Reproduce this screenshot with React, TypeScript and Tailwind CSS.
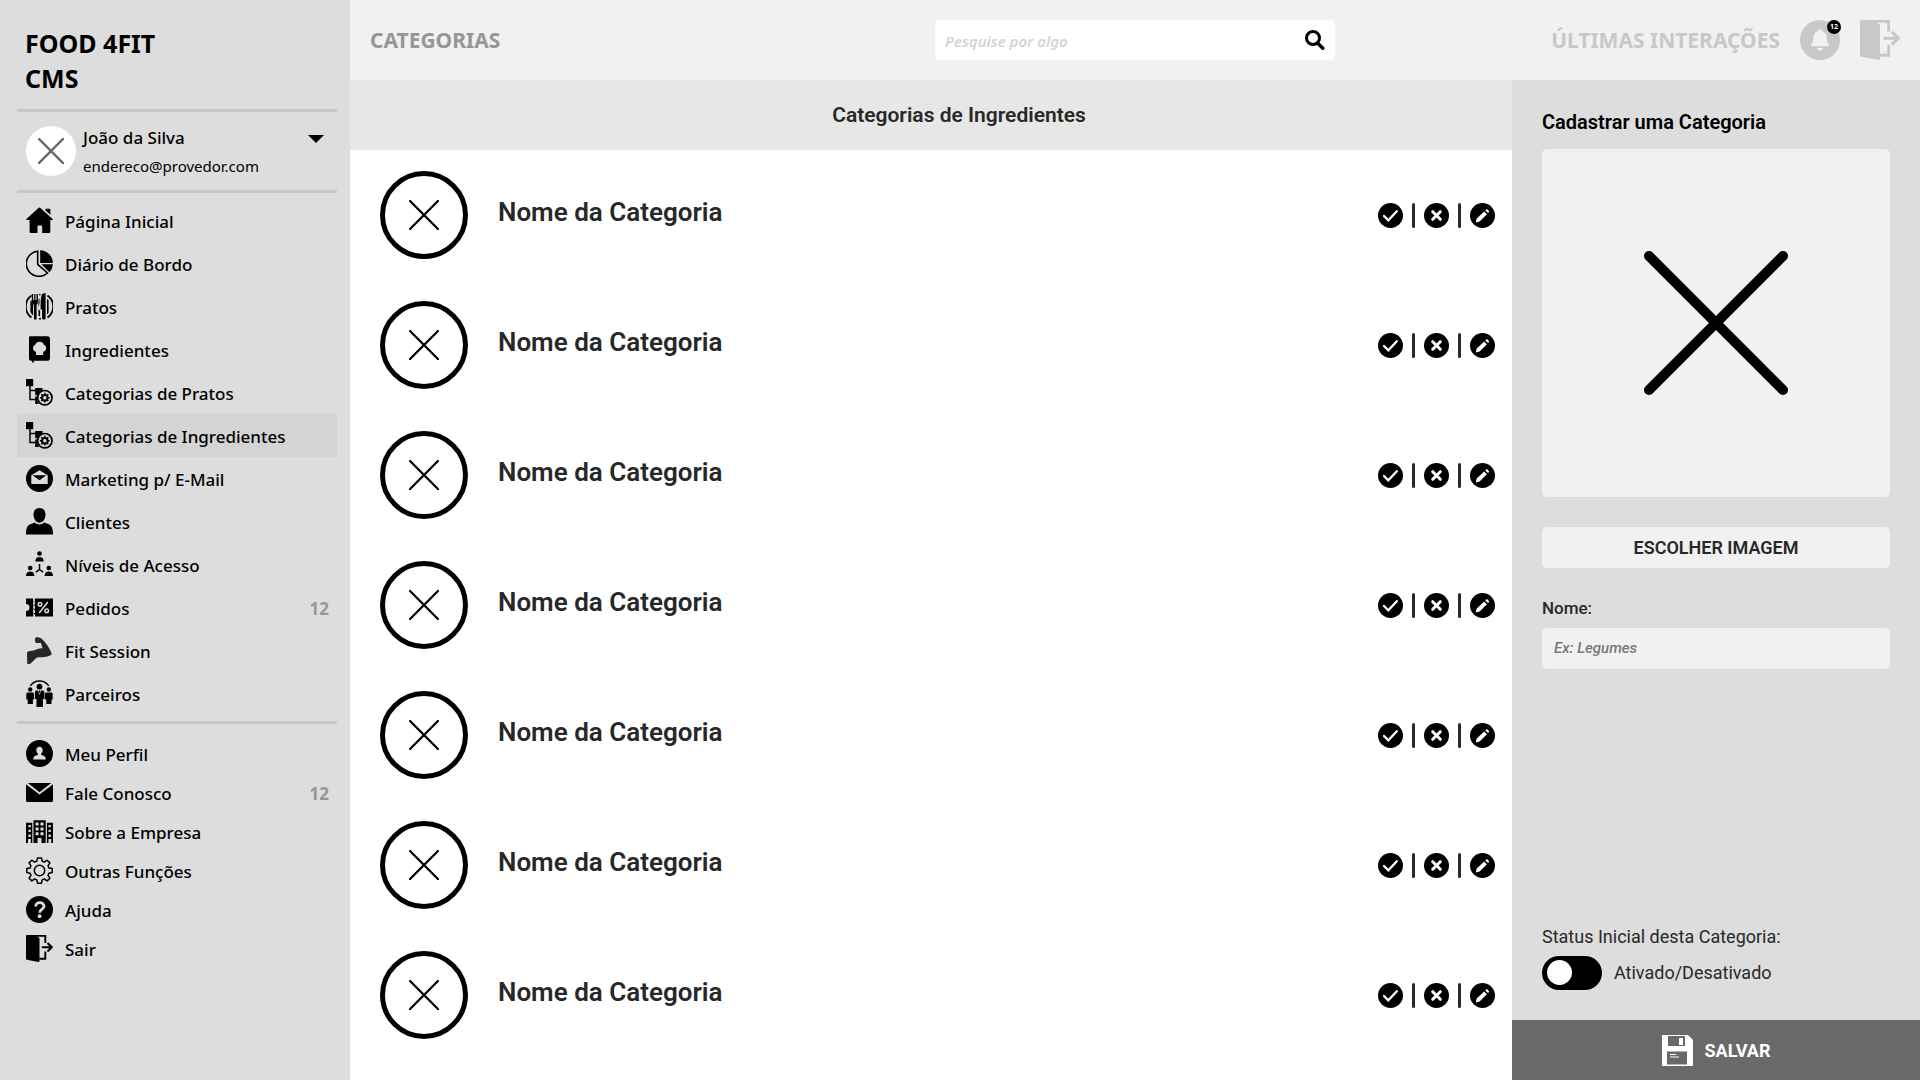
import type { ReactNode } from "react";

type IconProps = { className?: string };

function Svg({ children, className = "size-[27px]", box = "0 0 27 27" }: { children: ReactNode; className?: string; box?: string }) {
  return (
    <svg viewBox={box} className={`shrink-0 ${className}`} fill="currentColor" aria-hidden="true">
      {children}
    </svg>
  );
}

const HomeIcon = () => (
  <Svg>
    <path d="M13.4 0.5a1 1 0 0 1 .7.3L26.6 12c.4.4.3.9-.2 1h-2.1v11.800a1.200 1.200 0 0 1-1.200 1.200H16.200v-6.600a1 1 0 0 0-1-1h-2.700a1 1 0 0 0-1 1V26H4.800a1.200 1.200 0 0 1-1.200-1.200V13H.7c-.6-.1-.7-.6-.3-1L12.700.8a1 1 0 0 1 .7-.3z" />
    <path d="M19.500 2.500a.8.8 0 0 1 .8-.8h3.300a.8.8 0 0 1 .8.8v5.300l-4.900-4.300z" />
  </Svg>
);

const PieIcon = () => (
  <Svg>
    <path d="M11.700 1.200A12.600 12.600 0 1 0 21.500 23l-9.300-8.200a1.500 1.500 0 0 1-.5-1.100z" fill="none" stroke="currentColor" strokeWidth="1.600" />
    <path d="M14.200 0.300A13 13 0 0 1 26.900 12.900H14.200z" />
    <path d="M15.300 14.200h11.600a13 13 0 0 1-3.400 8z" />
  </Svg>
);

const DishIcon = () => (
  <Svg>
    <path d="M5.500 2.500A13.500 13.500 0 0 0 5.500 24.500" fill="none" stroke="currentColor" strokeWidth="1.800" />
    <path d="M21.500 2.500A13.500 13.500 0 0 1 21.500 24.500" fill="none" stroke="currentColor" strokeWidth="1.800" />
    <path d="M4.400 8.200v10.600a9.500 9.500 0 0 0 2.700 3.800V11.500A5 5 0 0 1 5.500 7z" />
    <path d="M22.600 7.500v12a10 10 0 0 1-1.600 2V5.500z" />
    <path d="M5.800 1h1.300v6h1.100V1h1.300v6h1.100V1h1.300v8.200c0 1.200-.6 2-1.300 2.500V25.500a1.200 1.200 0 0 1-2.600 0V11.700C7 11 5.800 10.500 5.800 9z" />
    <path d="M15.500 2.500C16 .5 18 0 19.600.6V25.500c-.5 1.300-3 1.300-3.500 0V16.500h-1.500C14.600 11 14.600 6 15.500 2.500z" />
    <path d="M13 1h1.500v1.200H13zM13 25h2v1.500h-2zM12.500 5.500l1 .5v4.500l-1 4zM12.500 16l1.600 2v5.200l-1.600-.5z" />
  </Svg>
);

const RecipeIcon = () => (
  <Svg>
    <path fillRule="evenodd" d="M4.200.2h17a2.800 2.800 0 0 1 2.800 2.800v18.900a2.800 2.800 0 0 1-2.800 2.800H7.800v1.900H6v-1.900H5a2 2 0 0 1-2-2V1.400A1.200 1.200 0 0 1 4.200.2zM10 19h7.200v-3.300a3.600 3.600 0 0 0 .8-6.900 4.700 4.700 0 0 0-8.800 0 3.600 3.600 0 0 0 .8 6.900z" />
  </Svg>
);

const CategoryIcon = () => (
  <Svg>
    <path d="M0 0h7.200v7.200H0z" />
    <path d="M4 7v13.500h6M4 11.500h6" fill="none" stroke="currentColor" strokeWidth="1.500" />
    <path d="M9.200 9h7.300v2.400a8.600 8.600 0 0 0-4.700 5.100l-1.600-.5-1 .5zM9.200 17.500h2.200a9 9 0 0 0 1.700 7.500H9.200z" />
    <circle cx="18.800" cy="18.700" r="7.200" fill="none" stroke="currentColor" strokeWidth="1.700" />
    <circle cx="18.800" cy="18.700" r="3" fill="none" stroke="currentColor" strokeWidth="1.600" />
    <g stroke="currentColor" strokeWidth="1.500">
      <path d="M18.800 13.800v9.800M13.900 18.700h9.800M15.300 15.200l7 7M22.300 15.200l-7 7" />
    </g>
    <circle cx="18.800" cy="18.700" r="1.700" className="fill-[#dddddd]" />
  </Svg>
);

const MarketingIcon = () => (
  <Svg>
    <circle cx="13.500" cy="13.500" r="13.500" />
    <path className="fill-[#dddddd]" d="M5.300 10.300 13.500 5.200l8.200 5.100v8.600H5.300z" />
    <path d="M6.500 10.300h14l-7 4.900z" />
  </Svg>
);

const PersonIcon = () => (
  <Svg>
    <path d="M13.500 0c3.800 0 6 2.700 6 6.500 0 4.200-2.500 8.300-6 8.300s-6-4.100-6-8.300C7.500 2.700 9.700 0 13.500 0z" />
    <path d="M0 26.500c0-6 1.400-8.900 3.700-9.900l5-2c1.300 1.300 3 2 4.800 2s3.500-.7 4.800-2l5 2c2.300 1 3.700 3.900 3.700 9.900z" />
  </Svg>
);

const LevelsIcon = () => (
  <Svg>
    {[
      [13.500, 1],
      [4.200, 15.500],
      [22.800, 15.500],
    ].map(([x, y]) => (
      <g key={x}>
        <circle cx={x} cy={y + 1.500} r="2.300" />
        <path d={`M${x - 4.200} ${y + 9.400}c0-3 1.700-4.400 4.200-4.400s4.200 1.400 4.200 4.400z`} />
      </g>
    ))}
    <path d="M13.500 13v5.500l-3.700 2.600M13.500 18.500l3.700 2.600" fill="none" stroke="currentColor" strokeWidth="1.500" />
  </Svg>
);

const TicketIcon = () => (
  <Svg>
    <path d="M0 4.500h7.200v18H0v-5.500a3.500 3.500 0 0 0 0-7z" />
    <path d="M9 4.500h18v18H9v-2.200h-1.300v-1.300H9v-3H7.700v-1.300H9v-3H7.700v-1.300H9v-3H7.700V7H9z" />
    <g className="stroke-[#dddddd]" fill="none" strokeWidth="1.500">
      <path d="M21.800 8 13.200 19" />
      <circle cx="14" cy="10.300" r="1.800" />
      <circle cx="20.700" cy="16.700" r="1.800" />
    </g>
  </Svg>
);

const ArmIcon = () => (
  <Svg className="size-[27px] text-[#262626]">
    <path d="M10 .3c2 .1 4 .2 5.300 1.200C18.500 4 22.800 9.500 25.300 15.500c.7 1.700.2 2.500-1.300 3-3 1.100-6 2-9 1.700-2.700-.2-4.200.2-5.500 1.500L4.600 26.500c-.5.5-1 .4-3.300.4L1 17c0-1.700.6-2.500 2.200-2.700 3-.4 6-.9 8.600-2.200 1.600-.8 3.200-.9 4.800-.7-.6-1.700-1.100-3.700-1.700-5.700-1.700.8-3 .2-4.200.3-1 .1-1.600-.8-1.600-2C8.900 2.500 9 .9 10 .3z" />
  </Svg>
);

const PartnersIcon = () => (
  <Svg>
    <path d="M4.200 6C8.500-.7 18.500-.7 22.800 6" fill="none" stroke="currentColor" strokeWidth="1.300" />
    <circle cx="13.500" cy="6.700" r="2.900" />
    <path d="M10.300 10.600h1.500l1.700 4.300 1.700-4.300h1.500c1 0 1.700.7 1.700 1.700v6.600h-1.500V27h-5.200v0h-1.200V18.900H9V12.300c0-1 .5-1.700 1.300-1.700z" />
    <path d="M13 10.600h1l.4 1-.9 2-.9-2z" />
    {[4.200, 22.800].map((x) => (
      <g key={x}>
        <circle cx={x} cy="9.500" r="2.200" />
        <path d={`M${x - 2.200} 12.400h4.400c1 0 1.700.7 1.700 1.600v5.500h-1.200V24h-5.200v-4.500h-1.400V14c0-.9.700-1.600 1.700-1.600z`} />
      </g>
    ))}
  </Svg>
);

const ProfileIcon = () => (
  <Svg>
    <circle cx="13.500" cy="13.500" r="13.500" />
    <path className="fill-[#dddddd]" d="M13.500 6.700c2 0 3.200 1.400 3.200 3.400 0 1.700-.7 2.900-1.600 3.700v1l3 1.200c1.100.5 1.600 1.800 1.600 3.500H7.300c0-1.700.5-3 1.600-3.500l3-1.200v-1c-.9-.8-1.600-2-1.600-3.700 0-2 1.200-3.400 3.200-3.400z" />
  </Svg>
);

const EnvelopeIcon = () => (
  <Svg>
    <path d="M1.800 4h23.400L13.500 13.200z" />
    <path d="M0 5.300 13.500 15.500 27 5.300V21.500A1.500 1.500 0 0 1 25.500 23h-24A1.500 1.500 0 0 1 0 21.500z" />
  </Svg>
);

const BuildingIcon = () => (
  <Svg>
    <path d="M7.500 2.300h12.200V25h-4.200v-5h-4v5H7.500zM0 4.800h6.300V25H4.800v-4H2v4H0zM20.900 4.800H27V25h-1.800v-4h-2.700v4h-1.600z" />
    <g className="fill-[#dddddd]">
      {[4.600, 9.400, 14.200].map((y) => (
        <g key={y}>
          <path d={`M9.600 ${y}h3v3h-3zM14.500 ${y}h3v3h-3z`} />
          <path d={`M2.500 ${y + 2.300}h2.300v2.400H2.500zM22.500 ${y + 2.300}h2.300v2.400h-2.300z`} />
        </g>
      ))}
    </g>
  </Svg>
);

const GearIcon = () => (
  <Svg>
    <g fill="none" stroke="currentColor" strokeWidth="1.500" strokeLinejoin="round">
      <circle cx="13.500" cy="13.500" r="5.200" />
      <path d="M11.500 .9h4l.7 3.300 2.100.9 2.900-1.900 2.700 2.700L22 8.800l.9 2.100 3.300.7v3.900l-3.300.7-.9 2.100 1.900 2.900-2.700 2.700-2.900-1.900-2.100.9-.7 3.300h-4l-.7-3.300-2.100-.9-2.900 1.900-2.700-2.700L5 18.300l-.9-2.100-3.300-.7v-3.900l3.300-.7L5 8.800 3.100 5.900l2.700-2.700 2.900 1.900 2.100-.9z" />
    </g>
  </Svg>
);

const HelpIcon = () => (
  <Svg>
    <circle cx="13.500" cy="13.500" r="13.500" />
    <path className="stroke-[#dddddd]" d="M9.700 10.500c0-5 8.300-5 8.300-.3 0 3-4.300 2.700-4.300 6.500" fill="none" strokeWidth="2.800" />
    <circle className="fill-[#dddddd]" cx="13.600" cy="20.200" r="1.900" />
  </Svg>
);

const ExitIcon = ({ className }: IconProps) => (
  <Svg className={className}>
    <path d="M0 1a1 1 0 0 1 1-1h9.500v1.300L13 2.800c.4.200.5.600.5 1V26c0 .7-.4 1.100-1.100 1L1 24.800a1.200 1.200 0 0 1-1-1.200z" />
    <path d="M9.500 .9h9.800V8M19.300 16.500v7.300h-6" fill="none" stroke="currentColor" strokeWidth="1.900" />
    <path d="M15.800 12.300h9.500M21.500 8l4.300 4.300-4.300 4.300" fill="none" stroke="currentColor" strokeWidth="2.100" strokeLinejoin="round" />
  </Svg>
);

const CrossIcon = ({ className, width }: { className: string; width: number }) => (
  <Svg className={className} box="0 0 144 144">
    <path d="M5 5 139 139M139 5 5 139" fill="none" stroke="currentColor" strokeWidth={width} strokeLinecap="round" />
  </Svg>
);

const SearchIcon = () => (
  <Svg className="size-5" box="0 0 20 20">
    <circle cx="8" cy="8" r="6.500" fill="none" stroke="currentColor" strokeWidth="3" />
    <path d="m13 13.500 4.800 4.800" fill="none" stroke="currentColor" strokeWidth="3.400" strokeLinecap="round" />
  </Svg>
);

const BellIcon = () => (
  <Svg className="size-10" box="0 0 40 40">
    <circle cx="20" cy="20" r="20" />
    <path className="fill-[#f1f1f1]" d="M20 8.800c1 0 1.500.8 1.500 2 3.400.9 5 3.600 5.200 7 .2 3.800.5 5 2 6.800.7.900.3 1.700-.8 1.700H12.100c-1.100 0-1.500-.8-.8-1.700 1.500-1.800 1.800-3 2-6.800.2-3.400 1.800-6.100 5.200-7 0-1.200.5-2 1.500-2zM17 28h6c-.3 1.800-1.500 2.700-3 2.700s-2.700-.9-3-2.700z" />
  </Svg>
);

const CheckCircle = () => (
  <Svg className="size-[25px]" box="0 0 25 25">
    <circle cx="12.500" cy="12.500" r="12.500" />
    <path d="m6 13 4.300 4.300L18.800 8.200" fill="none" stroke="white" strokeWidth="2.300" strokeLinecap="round" />
  </Svg>
);

const TimesCircle = () => (
  <Svg className="size-[25px]" box="0 0 25 25">
    <circle cx="12.500" cy="12.500" r="12.500" />
    <path d="m8.700 8.700 7.600 7.600M16.300 8.700l-7.600 7.600" fill="none" stroke="white" strokeWidth="3" strokeLinecap="round" />
  </Svg>
);

const PencilCircle = () => (
  <Svg className="size-[25px]" box="0 0 25 25">
    <circle cx="12.500" cy="12.500" r="12.500" />
    <path fill="white" d="m14.200 8.500 2.700 2.700-7.300 7.300-3.800.9.900-3.800zM15.300 7.400l.8-.8c.5-.5.9-.5 1.400 0l1.300 1.300c.5.500.5.9 0 1.400l-.8.8z" />
  </Svg>
);

const SaveIcon = () => (
  <Svg className="size-[31px]" box="0 0 31 31">
    <path d="M0 0h26l5 5v26H0z" />
    <path className="fill-[#696969]" fillRule="evenodd" d="M6 1h17v10H6zM17 3v7h4V3z" />
    <path className="fill-[#696969]" d="M5 16.500h20v13H5z" />
    <path d="M8 19.500h6M8 22h9" stroke="white" strokeWidth="1" />
  </Svg>
);

type Item = { label: string; icon: ReactNode; count?: number; active?: boolean };

const mainItems: Item[] = [
  { label: "Página Inicial", icon: <HomeIcon /> },
  { label: "Diário de Bordo", icon: <PieIcon /> },
  { label: "Pratos", icon: <DishIcon /> },
  { label: "Ingredientes", icon: <RecipeIcon /> },
  { label: "Categorias de Pratos", icon: <CategoryIcon /> },
  { label: "Categorias de Ingredientes", icon: <CategoryIcon />, active: true },
  { label: "Marketing p/ E-Mail", icon: <MarketingIcon /> },
  { label: "Clientes", icon: <PersonIcon /> },
  { label: "Níveis de Acesso", icon: <LevelsIcon /> },
  { label: "Pedidos", icon: <TicketIcon />, count: 12 },
  { label: "Fit Session", icon: <ArmIcon /> },
  { label: "Parceiros", icon: <PartnersIcon /> },
];

const accountItems: Item[] = [
  { label: "Meu Perfil", icon: <ProfileIcon /> },
  { label: "Fale Conosco", icon: <EnvelopeIcon />, count: 12 },
  { label: "Sobre a Empresa", icon: <BuildingIcon /> },
  { label: "Outras Funções", icon: <GearIcon /> },
  { label: "Ajuda", icon: <HelpIcon /> },
  { label: "Sair", icon: <ExitIcon /> },
];

function NavList({ items, rowClass }: { items: Item[]; rowClass: string }) {
  return (
    <ul>
      {items.map((item) => (
        <li key={item.label} className={`flex ${rowClass} ${item.active ? "bg-[#d4d4d4]" : ""}`}>
          <a href="#" className="flex flex-1 items-center gap-3 pl-[9px] pr-2 text-[17px] font-medium text-black" aria-current={item.active ? "page" : undefined}>
            {item.icon}
            <span className="pt-[2px] whitespace-nowrap">{item.label}</span>
            {item.count !== undefined && <span className="ml-auto pt-[2px] font-bold text-[#969696]">{item.count}</span>}
          </a>
        </li>
      ))}
    </ul>
  );
}

function Sidebar() {
  return (
    <aside className="w-[350px] shrink-0 bg-[#dddddd] pr-[13px] pl-[17px] font-['Noto_Sans',sans-serif]">
      <h1 className="pt-[26px] pb-[13px] pl-2 text-[25px] leading-[35px] font-bold">
        FOOD 4FIT
        <br />
        CMS
      </h1>
      <hr className="border-t-[3px] border-[#c8c8c8]" />
      <button type="button" className="flex h-[78px] w-full items-center pl-[9px] pr-[13px] text-left">
        <span className="grid size-[50px] shrink-0 place-items-center rounded-full bg-white text-[#696969]">
          <CrossIcon className="size-[26px]" width={13} />
        </span>
        <span className="ml-[7px] flex-1 pt-[2px]">
          <span className="block text-[17px] leading-7 font-medium">João da Silva</span>
          <span className="block text-[15px] leading-7">endereco@provedor.com</span>
        </span>
        <Svg className="mb-6 h-2 w-4" box="0 0 16 8">
          <path d="M0 0h16L8 8z" />
        </Svg>
      </button>
      <hr className="border-t-[3px] border-[#c8c8c8]" />
      <nav aria-label="Principal" className="pt-[6px] pb-[6px]">
        <NavList items={mainItems} rowClass="h-[43px]" />
      </nav>
      <hr className="border-t-[3px] border-[#c8c8c8]" />
      <nav aria-label="Conta" className="pt-[10px]">
        <NavList items={accountItems} rowClass="h-[39px]" />
      </nav>
    </aside>
  );
}

function Header() {
  return (
    <header className="grid h-20 shrink-0 grid-cols-[1fr_400px_1fr] items-center bg-[#f1f1f1] px-5 font-['Noto_Sans',sans-serif]">
      <h2 className="pt-[2px] text-[21px] font-bold text-[#969696]">CATEGORIAS</h2>
      <form role="search" className="flex h-10 items-center rounded-[5px] bg-white pr-[10px] pl-[10px]" onSubmit={(e) => e.preventDefault()}>
        <input type="search" aria-label="Pesquisar" placeholder="Pesquise por algo" className="min-w-0 flex-1 pt-[2px] text-[15px] font-semibold outline-none placeholder:text-[#d4d4d4] placeholder:italic" />
        <button type="submit" aria-label="Buscar">
          <SearchIcon />
        </button>
      </form>
      <div className="flex items-center justify-end gap-5 text-[#c8c8c8]">
        <a href="#" className="pt-[2px] text-[21px] font-bold whitespace-nowrap">ÚLTIMAS INTERAÇÕES</a>
        <button type="button" aria-label="Notificações" className="relative">
          <BellIcon />
          <span className="absolute top-0 -right-px grid size-[14px] place-items-center rounded-full bg-black text-[7px] font-bold text-white">12</span>
        </button>
        <button type="button" aria-label="Sair">
          <ExitIcon className="size-10" />
        </button>
      </div>
    </header>
  );
}

function CategoryRow() {
  return (
    <li className="flex h-[130px] items-center pr-[17px] pl-[30px]">
      <span className="grid size-[88px] place-items-center rounded-full border-[5px] border-black">
        <CrossIcon className="size-[30px]" width={11} />
      </span>
      <h4 className="ml-[30px] flex-1 pb-[6px] text-[26px] font-semibold text-[#282828]">Nome da Categoria</h4>
      <div className="flex items-center gap-[9px]">
        <button type="button" aria-label="Ativar"><CheckCircle /></button>
        <span className="h-[25px] w-[3px] rounded-full bg-[#282828]" />
        <button type="button" aria-label="Excluir"><TimesCircle /></button>
        <span className="h-[25px] w-[3px] rounded-full bg-[#282828]" />
        <button type="button" aria-label="Editar"><PencilCircle /></button>
      </div>
    </li>
  );
}

function CategoryForm() {
  return (
    <form className="flex w-[408px] shrink-0 flex-col bg-[#dddddd] text-[#282828]" onSubmit={(e) => e.preventDefault()}>
      <div className="flex flex-1 flex-col px-[30px] pt-7 pb-[30px]">
        <h3 className="text-[20px] leading-7 font-semibold text-black">Cadastrar uma Categoria</h3>
        <div className="mt-[13px] grid aspect-square place-items-center rounded-[5px] bg-[#f1f1f1] text-black">
          <CrossIcon className="size-36" width={10} />
        </div>
        <button type="button" className="mt-[30px] h-[41px] rounded-[5px] bg-[#f1f1f1] text-[18px] font-semibold">ESCOLHER IMAGEM</button>
        <label htmlFor="nome" className="mt-7 text-[17px] leading-6 font-medium">Nome:</label>
        <input id="nome" type="text" placeholder="Ex: Legumes" className="mt-2 h-[41px] rounded-[5px] bg-[#f1f1f1] px-3 pb-[2px] text-[15px] font-medium outline-none placeholder:text-[#787878] placeholder:italic" />
        <p className="mt-auto text-[18px] leading-6">Status Inicial desta Categoria:</p>
        <label className="mt-[7px] flex items-center gap-3 text-[18px]">
          <input type="checkbox" role="switch" className="h-[34px] w-[60px] appearance-none rounded-full bg-black pl-[5px] before:mt-1 before:block before:size-[25px] before:rounded-full before:bg-white checked:pl-[30px]" />
          <span className="pb-[2px]">Ativado/Desativado</span>
        </label>
      </div>
      <button type="submit" className="flex h-[60px] items-center justify-center gap-3 bg-[#696969] text-[18px] font-bold text-white">
        <SaveIcon />
        SALVAR
      </button>
    </form>
  );
}

export default function App() {
  return (
    <div className="flex min-h-screen bg-white font-[Roboto,sans-serif] text-black">
      <Sidebar />
      <div className="flex min-w-0 flex-1 flex-col">
        <Header />
        <div className="flex flex-1">
          <main className="flex-1">
            <h3 className="flex h-[70px] items-center justify-center bg-[#e7e7e7] pt-[2px] pl-14 text-[21px] font-semibold text-[#282828]">Categorias de Ingredientes</h3>
            <ul>
              {Array.from({ length: 7 }, (_, i) => (
                <CategoryRow key={i} />
              ))}
            </ul>
          </main>
          <CategoryForm />
        </div>
      </div>
    </div>
  );
}
